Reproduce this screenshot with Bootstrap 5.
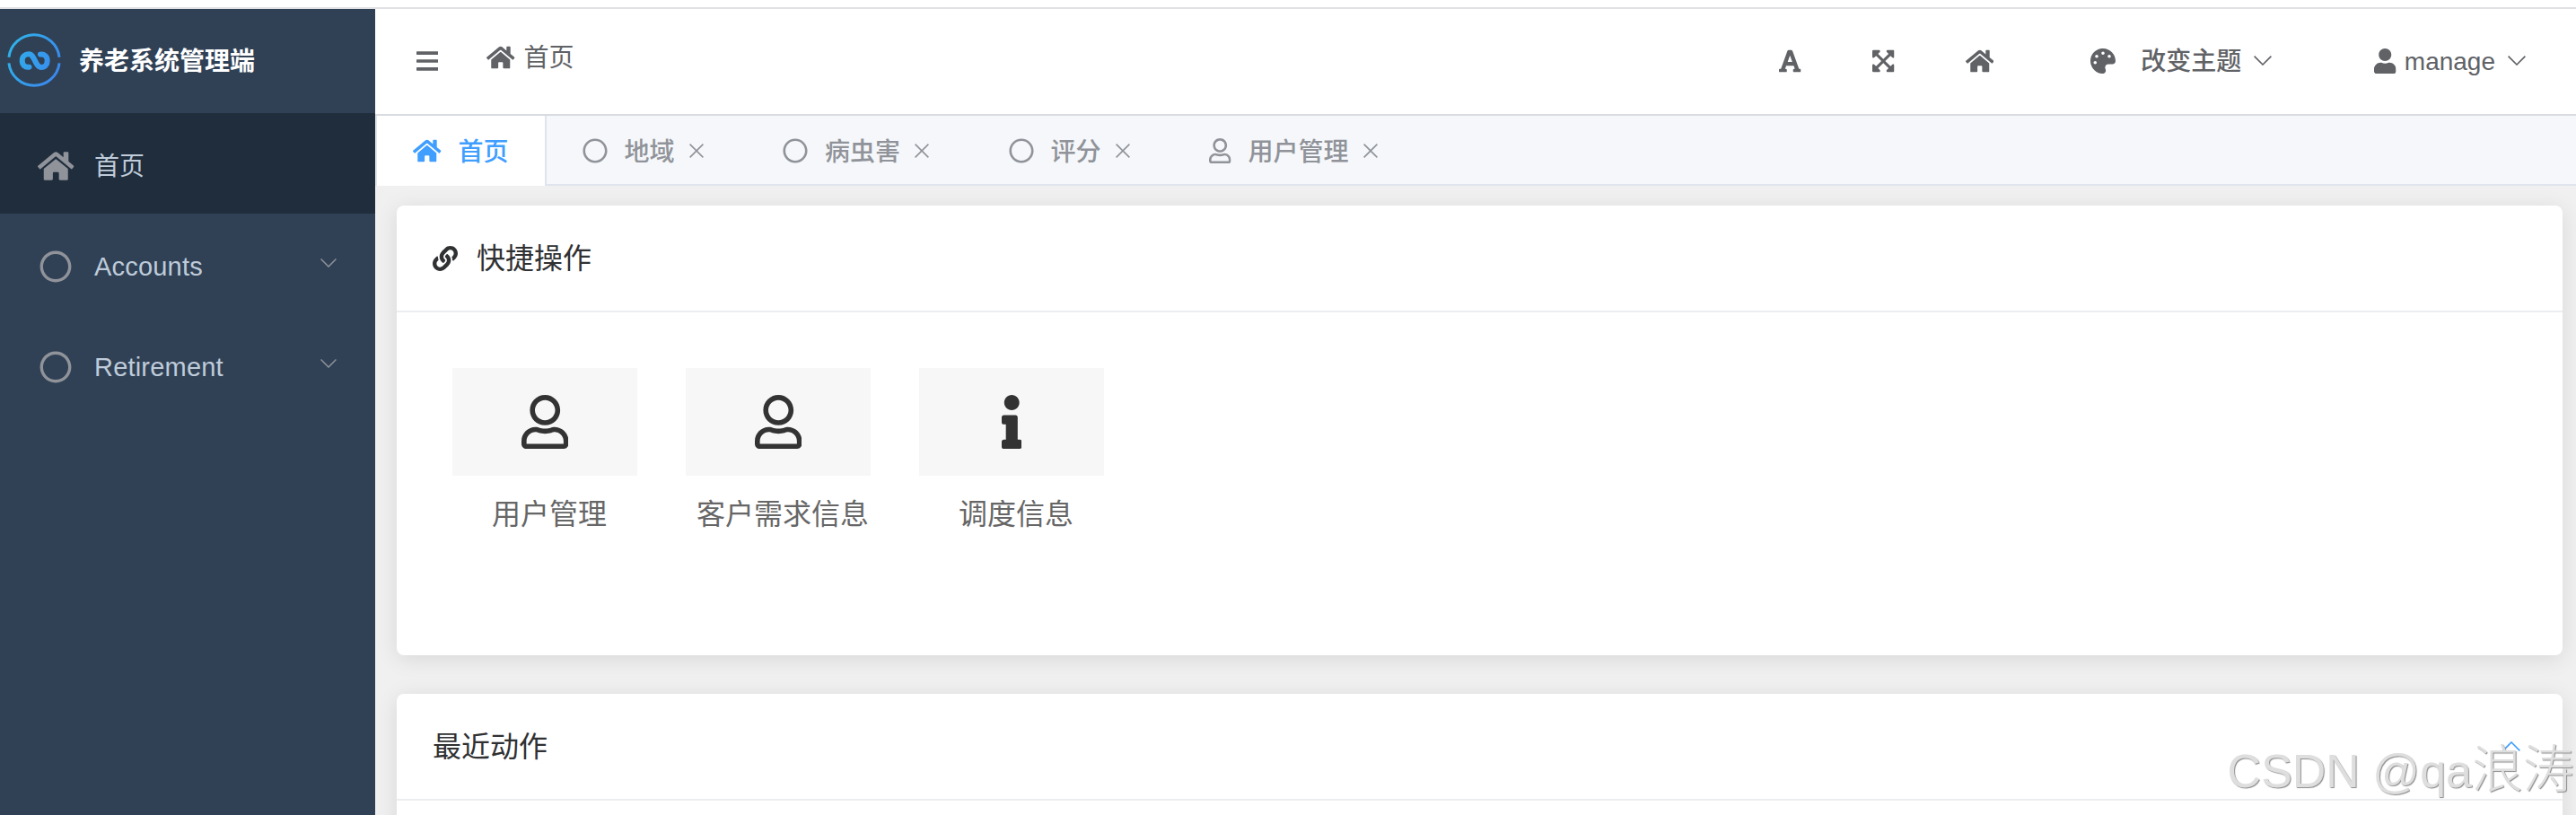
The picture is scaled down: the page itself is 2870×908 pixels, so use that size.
<!DOCTYPE html>
<html lang="zh-CN">
<head>
    <meta charset="UTF-8">
    <title>养老系统管理端</title>
    <meta name="viewport" content="width=device-width, initial-scale=1">
    <!-- Bootstrap CSS -->
    <link href="https://cdn.jsdelivr.net/npm/bootstrap@5.3.0/dist/css/bootstrap.min.css" rel="stylesheet">
    <style>
        body {
            height: 908px;
            font-family: "Liberation Sans", "Noto Sans CJK SC", sans-serif;
            font-size: 28px;
            line-height: 1;
            color: #606266;
            background: #fff;
            overflow: hidden;
        }
        svg {
            display: block;
            flex: none;
            fill: currentColor;
        }
        .line-icon {
            fill: none;
            stroke: currentColor;
            stroke-width: 1.6;
        }
        /* icon sizes */
        .ic-sq { width: 28px; height: 28px; }
        .ic-home { width: 31.5px; height: 28px; }
        .ic-tall { width: 24.5px; height: 28px; }
        .ic-arrow { width: 20px; height: 11px; }
        .ic-close { width: 16px; height: 16px; }

        /* optical centring of text next to icons */
        .brand span,
        .topbar span,
        .tab-cell span,
        .side-label { padding-top: 3px; }

        .top-strip {
            height: 10px;
            border-bottom: 2px solid #dfe1e5;
        }
        .shell { height: 898px; }

        /* Sidebar */
        .sidebar {
            width: 418px;
            background: #304156;
        }
        .brand {
            height: 116px;
            padding: 0 0 2px 8px;
            color: #fff;
            font-weight: 700;
        }
        .brand svg { width: 60px; height: 60px; }
        .brand span { margin-left: 20px; }
        .side-item {
            height: 112px;
            padding: 5px 42px 0 42px;
            color: #bfcbd9;
        }
        .side-latin {
            padding-top: 1px;
            font-size: 29px;
            letter-spacing: .2px;
        }
        .side-item.active { background: #1f2d3d; }
        .side-icon {
            width: 40.5px;
            margin-right: 22.5px;
            color: #909399;
        }
        .side-icon svg { height: 36px; }
        .side-arrow {
            width: 18px;
            height: 10px;
            margin: 0 1px 8px auto;
            color: #909399;
        }

        /* Header */
        .topbar {
            height: 119px;
            padding: 0 56px 2px 45.5px;
            border-bottom: 2px solid #d8dce0;
        }
        .crumb {
            margin-left: 54px;
            padding-bottom: 8px;
        }
        .crumb span { margin-left: 10px; }
        .tool-expand { margin-left: 79.5px; }
        .tool-home { margin-left: 79px; }
        .tool-theme { margin-left: 108px; font-weight: 500; }
        .tool-theme span { margin: 0 14px 0 28px; }
        .tool-user { margin-left: 114px; }
        .tool-user span { margin: 0 14px 0 9px; }

        /* Tabs */
        .tabs-bar {
            height: 78px;
            background: #f5f7fa;
            border-bottom: 2px solid #dfe4ed;
            border-left: 2px solid #dfe4ed;
            color: #909399;
            font-weight: 500;
        }
        .tab-cell {
            height: 76px;
            padding: 2px 48.5px 0 40px;
        }
        .tab-cell span { margin: 0 16px 0 19px; }
        .tab-cell.active {
            height: 78px;
            padding: 0 40px 0 40px;
            background: #fff;
            border-right: 2px solid #dfe4ed;
            color: #409eff;
        }
        .tab-cell.active span { margin: 0 0 0 19px; }

        /* Content */
        .content {
            padding: 22px 15px 0 24px;
            background: #f0f0f0;
            overflow: hidden;
        }
        .panel {
            margin-bottom: 43px;
            background: #fff;
            border-radius: 8px;
            box-shadow: 0 4px 24px rgba(0, 0, 0, .1);
            color: #303133;
            font-size: 32px;
        }
        .panel-quick { height: 501px; }
        .panel-recent { height: 300px; }
        .panel-head {
            height: 119px;
            padding: 0 47px 0 40px;
            border-bottom: 2px solid #ebeef0;
        }
        .panel-head span { margin-left: 21px; }
        .panel-recent .panel-head span { margin-left: 0; }
        .quick-list {
            padding: 62px;
            gap: 54px;
        }
        .quick-tile { width: 206px; }
        .quick-box {
            height: 120px;
            background: #f7f7f7;
            color: #333;
        }
        .quick-box svg { height: 60px; }
        .quick-text {
            margin-top: 27px;
            padding-left: 10px;
            color: #666;
        }
        .collapse-arrow {
            width: 20px;
            height: 11px;
            color: #409eff;
        }

        .stamp {
            right: 2px;
            bottom: 22px;
            font-size: 52px;
            color: #dedede;
            font-weight: 300;
            text-shadow: 1px 1px 1px #8c8c8c;
        }
        .stamp span { font-size: 57px; }
    </style>
</head>
<body>
    <!-- Icon shapes -->
    <svg class="d-none" xmlns="http://www.w3.org/2000/svg">
        <symbol id="home" viewBox="0 0 576 512"><path d="M280.37 148.26L96 300.11V464a16 16 0 0 0 16 16l112.06-.29a16 16 0 0 0 15.92-16V368a16 16 0 0 1 16-16h64a16 16 0 0 1 16 16v95.64a16 16 0 0 0 16 16.05L464 480a16 16 0 0 0 16-16V300L295.67 148.26a12.19 12.19 0 0 0-15.3 0zM571.6 251.47L488 182.56V44.05a12 12 0 0 0-12-12h-56a12 12 0 0 0-12 12v72.61L318.47 43a48 48 0 0 0-61 0L4.34 251.47a12 12 0 0 0-1.6 16.9l25.5 31A12 12 0 0 0 45.15 301l235.22-193.74a12.19 12.19 0 0 1 15.3 0L530.9 301a12 12 0 0 0 16.9-1.6l25.5-31a12 12 0 0 0-1.7-16.93z"/></symbol>
        <symbol id="circle" viewBox="0 0 512 512"><path d="M256 8C119 8 8 119 8 256s111 248 248 248 248-111 248-248S393 8 256 8zm0 448c-110.5 0-200-89.5-200-200S145.5 56 256 56s200 89.5 200 200-89.5 200-200 200z"/></symbol>
        <symbol id="bars" viewBox="0 0 448 512"><path d="M8 60h432a8 8 0 0 1 8 8v50a8 8 0 0 1-8 8H8a8 8 0 0 1-8-8V68a8 8 0 0 1 8-8zm0 163h432a8 8 0 0 1 8 8v50a8 8 0 0 1-8 8H8a8 8 0 0 1-8-8v-50a8 8 0 0 1 8-8zm0 163h432a8 8 0 0 1 8 8v50a8 8 0 0 1-8 8H8a8 8 0 0 1-8-8v-50a8 8 0 0 1 8-8z"/></symbol>
        <symbol id="user-line" viewBox="0 0 448 512"><path d="M313.6 304c-28.7 0-42.5 16-89.6 16-47.1 0-60.8-16-89.6-16C60.2 304 0 364.2 0 438.4V464c0 26.5 21.5 48 48 48h352c26.5 0 48-21.5 48-48v-25.6c0-74.2-60.2-134.4-134.4-134.4zM400 464H48v-25.6c0-47.6 38.8-86.4 86.4-86.4 14.6 0 38.3 16 89.6 16 51.7 0 74.9-16 89.6-16 47.6 0 86.4 38.8 86.4 86.4V464zM224 288c79.5 0 144-64.5 144-144S303.5 0 224 0 80 64.5 80 144s64.5 144 144 144zm0-240c52.9 0 96 43.1 96 96s-43.1 96-96 96-96-43.1-96-96 43.1-96 96-96z"/></symbol>
        <symbol id="user" viewBox="0 0 448 512"><path d="M224 256c70.7 0 128-57.3 128-128S294.7 0 224 0 96 57.3 96 128s57.3 128 128 128zm89.6 32h-16.7c-22.2 10.2-46.9 16-72.9 16s-50.6-5.8-72.9-16h-16.7C60.2 288 0 348.2 0 422.4V464c0 26.5 21.5 48 48 48h352c26.5 0 48-21.5 48-48v-41.6c0-74.2-60.2-134.4-134.4-134.4z"/></symbol>
        <symbol id="info" viewBox="0 0 192 512"><path d="M20 424.229h20V279.771H20c-11.046 0-20-8.954-20-20V212c0-11.046 8.954-20 20-20h112c11.046 0 20 8.954 20 20v212.229h20c11.046 0 20 8.954 20 20V492c0 11.046-8.954 20-20 20H20c-11.046 0-20-8.954-20-20v-47.771c0-11.046 8.954-20 20-20zM96 0C56.235 0 24 32.235 24 72s32.235 72 72 72 72-32.235 72-72S135.764 0 96 0z"/></symbol>
        <symbol id="font" viewBox="0 0 448 512"><path d="M432 416h-23.41L277.53 53.69A32 32 0 0 0 247.58 32h-47.16a32 32 0 0 0-29.95 21.69L39.41 416H16a16 16 0 0 0-16 16v32a16 16 0 0 0 16 16h128a16 16 0 0 0 16-16v-32a16 16 0 0 0-16-16h-19.58l23.3-64h152.56l23.3 64H304a16 16 0 0 0-16 16v32a16 16 0 0 0 16 16h128a16 16 0 0 0 16-16v-32a16 16 0 0 0-16-16zM176.85 272L224 142.51 271.15 272z"/></symbol>
        <symbol id="expand" viewBox="0 0 448 512"><path d="M448 344v112a23.94 23.94 0 0 1-24 24H312c-21.39 0-32.09-25.9-17-41l36.2-36.2L224 295.6 116.77 402.9 153 439c15.09 15.1 4.39 41-17 41H24a23.94 23.94 0 0 1-24-24V344c0-21.4 25.89-32.1 41-17l36.19 36.2L184.46 256 77.18 148.7 41 185c-15.1 15.1-41 4.4-41-17V56a23.94 23.94 0 0 1 24-24h112c21.39 0 32.09 25.9 17 41l-36.2 36.2L224 216.4l107.23-107.3L295 73c-15.09-15.1-4.39-41 17-41h112a23.94 23.94 0 0 1 24 24v112c0 21.4-25.89 32.1-41 17l-36.19-36.2L263.54 256l107.28 107.3L407 327.1c15.1-15.2 41-4.5 41 16.9z"/></symbol>
        <symbol id="palette" viewBox="0 0 512 512"><path d="M204.3 5C104.9 24.4 24.8 104.3 5.2 203.4c-37 187 131.7 326.4 258.8 306.7 41.2-6.4 61.4-54.6 42.5-91.7-23.1-45.4 9.9-98.4 60.9-98.4h79.7c35.8 0 64.8-29.6 64.9-65.3C511.5 97.1 368.1-26.9 204.3 5zM96 320c-17.7 0-32-14.3-32-32s14.3-32 32-32 32 14.3 32 32-14.3 32-32 32zm32-128c-17.7 0-32-14.3-32-32s14.3-32 32-32 32 14.3 32 32-14.3 32-32 32zm128-64c-17.7 0-32-14.3-32-32s14.3-32 32-32 32 14.3 32 32-14.3 32-32 32zm128 64c-17.7 0-32-14.3-32-32s14.3-32 32-32 32 14.3 32 32-14.3 32-32 32z"/></symbol>
        <symbol id="link" viewBox="0 0 512 512"><path d="M326.612 185.391c59.747 59.809 58.927 155.698.36 214.59-.11.12-.24.25-.36.37l-67.2 67.2c-59.27 59.27-155.699 59.262-214.96 0-59.27-59.26-59.27-155.7 0-214.96l37.106-37.106c9.84-9.84 26.786-3.3 27.294 10.606.648 17.722 3.826 35.527 9.69 52.721 1.986 5.822.567 12.262-3.783 16.612l-13.087 13.087c-28.026 28.026-28.905 73.66-1.155 101.96 28.024 28.579 74.086 28.749 102.325.51l67.2-67.19c28.191-28.191 28.073-73.757 0-101.83-3.701-3.694-7.429-6.564-10.341-8.569a16.037 16.037 0 0 1-6.947-12.606c-.396-10.567 3.348-21.456 11.698-29.806l21.054-21.055c5.521-5.521 14.182-6.199 20.584-1.731a152.482 152.482 0 0 1 20.522 17.197zM467.547 44.449c-59.261-59.262-155.69-59.27-214.96 0l-67.2 67.2c-.12.12-.25.25-.36.37-58.566 58.892-59.387 154.781.36 214.59a152.454 152.454 0 0 0 20.521 17.196c6.402 4.468 15.064 3.789 20.584-1.731l21.054-21.055c8.35-8.35 12.094-19.239 11.698-29.806a16.037 16.037 0 0 0-6.947-12.606c-2.912-2.005-6.64-4.875-10.341-8.569-28.073-28.073-28.191-73.639 0-101.83l67.2-67.19c28.239-28.239 74.3-28.069 102.325.51 27.75 28.3 26.872 73.934-1.155 101.96l-13.087 13.087c-4.35 4.35-5.769 10.79-3.783 16.612 5.864 17.194 9.042 34.999 9.69 52.721.509 13.906 17.454 20.446 27.294 10.606l37.106-37.106c59.271-59.259 59.271-155.699.001-214.959z"/></symbol>
        <symbol id="down" viewBox="0 0 20 11"><path d="M.6.6 10 10 19.4.6"/></symbol>
        <symbol id="up" viewBox="0 0 20 11"><path d="M.6 10.4 10 1l9.4 9.4"/></symbol>
        <symbol id="close" viewBox="0 0 16 16"><path d="M.6.6l14.8 14.8M15.4.6.6 15.4"/></symbol>
    </svg>

    <div class="top-strip"></div>
    <div class="shell d-flex">
        <!-- Sidebar -->
        <nav class="sidebar flex-shrink-0">
            <div class="brand d-flex align-items-center">
                <svg viewBox="0 0 60 60">
                    <defs>
                        <linearGradient id="ring" gradientUnits="userSpaceOnUse" x1="0" y1="15" x2="60" y2="45">
                            <stop offset="0" stop-color="#2fb4ea"/>
                            <stop offset="1" stop-color="#3b86ee"/>
                        </linearGradient>
                    </defs>
                    <g fill="none" stroke="url(#ring)">
                        <path stroke-width="3" d="M1.9 26.7A28.3 28.3 0 0 1 58.1 26.7M1.9 33.4A28.3 28.3 0 0 0 58.1 33.4"/>
                        <path stroke-width="6" stroke-linecap="round" d="M24.5 37.7C20 38.6 16.7 35.500 16.700 30.600C16.700 26 20 23.200 24 23.200C31 23.200 31 38 38 38C42 38 44.700 35 44.700 30.500C44.700 26 41.500 23 37 23.600"/>
                    </g>
                </svg>
                <span>养老系统管理端</span>
            </div>
            <div class="side-item active d-flex align-items-center">
                <div class="side-icon d-flex justify-content-center"><svg width="40.5"><use href="#home"/></svg></div>
                <span class="side-label">首页</span>
            </div>
            <div class="side-item d-flex align-items-center">
                <div class="side-icon d-flex justify-content-center"><svg width="36"><use href="#circle"/></svg></div>
                <span class="side-latin">Accounts</span>
                <svg class="side-arrow line-icon"><use href="#down"/></svg>
            </div>
            <div class="side-item d-flex align-items-center">
                <div class="side-icon d-flex justify-content-center"><svg width="36"><use href="#circle"/></svg></div>
                <span class="side-latin">Retirement</span>
                <svg class="side-arrow line-icon"><use href="#down"/></svg>
            </div>
        </nav>

        <div class="flex-grow-1 d-flex flex-column">
            <!-- Header -->
            <header class="topbar d-flex align-items-center flex-shrink-0">
                <svg class="ic-tall"><use href="#bars"/></svg>
                <div class="crumb d-flex align-items-center">
                    <svg class="ic-home"><use href="#home"/></svg>
                    <span>首页</span>
                </div>
                <div class="d-flex align-items-center ms-auto">
                    <svg class="ic-tall"><use href="#font"/></svg>
                    <svg class="ic-tall tool-expand"><use href="#expand"/></svg>
                    <svg class="ic-home tool-home"><use href="#home"/></svg>
                    <div class="tool-theme d-flex align-items-center">
                        <svg class="ic-sq"><use href="#palette"/></svg>
                        <span>改变主题</span>
                        <svg class="ic-arrow line-icon"><use href="#down"/></svg>
                    </div>
                    <div class="tool-user d-flex align-items-center">
                        <svg class="ic-tall"><use href="#user"/></svg>
                        <span>manage</span>
                        <svg class="ic-arrow line-icon"><use href="#down"/></svg>
                    </div>
                </div>
            </header>

            <!-- Open pages -->
            <div class="tabs-bar d-flex flex-shrink-0">
                <div class="tab-cell active d-flex align-items-center">
                    <svg class="ic-home"><use href="#home"/></svg>
                    <span>首页</span>
                </div>
                <div class="tab-cell d-flex align-items-center">
                    <svg class="ic-sq"><use href="#circle"/></svg>
                    <span>地域</span>
                    <svg class="ic-close line-icon"><use href="#close"/></svg>
                </div>
                <div class="tab-cell d-flex align-items-center">
                    <svg class="ic-sq"><use href="#circle"/></svg>
                    <span>病虫害</span>
                    <svg class="ic-close line-icon"><use href="#close"/></svg>
                </div>
                <div class="tab-cell d-flex align-items-center">
                    <svg class="ic-sq"><use href="#circle"/></svg>
                    <span>评分</span>
                    <svg class="ic-close line-icon"><use href="#close"/></svg>
                </div>
                <div class="tab-cell d-flex align-items-center">
                    <svg class="ic-tall"><use href="#user-line"/></svg>
                    <span>用户管理</span>
                    <svg class="ic-close line-icon"><use href="#close"/></svg>
                </div>
            </div>

            <main class="content flex-grow-1">
                <section class="panel panel-quick">
                    <div class="panel-head d-flex align-items-center">
                        <svg class="ic-sq"><use href="#link"/></svg>
                        <span>快捷操作</span>
                    </div>
                    <div class="quick-list d-flex">
                        <div class="quick-tile text-center">
                            <div class="quick-box d-flex align-items-center justify-content-center"><svg width="52.5"><use href="#user-line"/></svg></div>
                            <div class="quick-text">用户管理</div>
                        </div>
                        <div class="quick-tile text-center">
                            <div class="quick-box d-flex align-items-center justify-content-center"><svg width="52.5"><use href="#user-line"/></svg></div>
                            <div class="quick-text">客户需求信息</div>
                        </div>
                        <div class="quick-tile text-center">
                            <div class="quick-box d-flex align-items-center justify-content-center"><svg width="22.5"><use href="#info"/></svg></div>
                            <div class="quick-text">调度信息</div>
                        </div>
                    </div>
                </section>
                <section class="panel panel-recent">
                    <div class="panel-head d-flex align-items-center justify-content-between">
                        <span>最近动作</span>
                        <svg class="collapse-arrow line-icon"><use href="#up"/></svg>
                    </div>
                </section>
            </main>
        </div>
    </div>
    <div class="stamp position-absolute">CSDN @qa<span>浪涛</span></div>

    <!-- Bootstrap JS Bundle -->
    <script src="https://cdn.jsdelivr.net/npm/bootstrap@5.3.0/dist/js/bootstrap.bundle.min.js"></script>
</body>
</html>
